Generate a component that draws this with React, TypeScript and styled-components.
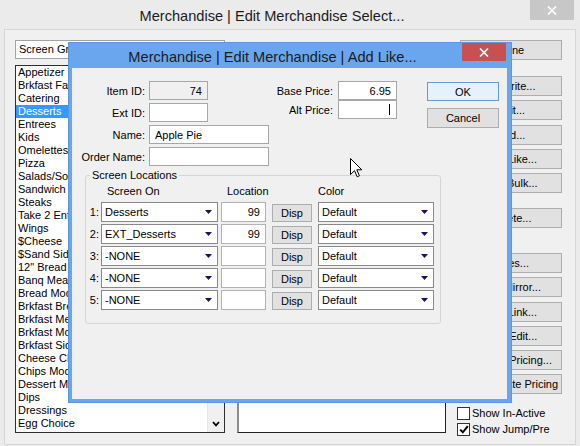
import React from "react";
import styled, { createGlobalStyle } from "styled-components";

const Global = createGlobalStyle`
  html, body { margin: 0; padding: 0; background: #ebebeb; }
  body { font-family: "Liberation Sans", Arial, sans-serif; font-size: 11px; color: #000; }
  * { box-sizing: border-box; }
`;

const Desktop = styled.div`
  position: relative;
  width: 580px;
  height: 446px;
  overflow: hidden;
  background: #ebebeb;
`;

const OuterWindow = styled.div`
  width: 580px;
  height: 446px;
  display: flex;
  flex-direction: column;
  background: #ebebeb;
`;

const TitleBar = styled.div<{ $h: number; $active?: boolean }>`
  height: ${(p) => p.$h}px;
  flex: none;
  display: flex;
  align-items: flex-start;
  padding-left: 14px;
  background: ${(p) => (p.$active ? "#6aa6ee" : "#ebebeb")};
`;

const TitleText = styled.div<{ $top: number }>`
  flex: 1;
  text-align: center;
  font-size: 14.6px;
  line-height: 18px;
  padding-top: ${(p) => p.$top}px;
  color: #1b1b1b;
  white-space: nowrap;
  overflow: hidden;
`;

const CloseButton = styled.div<{ $active?: boolean; $right: number; $h: number }>`
  width: 44px;
  height: ${(p) => p.$h}px;
  margin-right: ${(p) => p.$right}px;
  flex: none;
  display: flex;
  align-items: center;
  justify-content: center;
  background: ${(p) => (p.$active ? "#c75050" : "#c7c7c7")};
`;

const OuterClient = styled.div`
  flex: 1;
  margin: 0 4px 1px 4px;
  background: #f0f0f0;
  border: 1px solid #d6d6d6;
  display: flex;
  padding: 10px 0 0 10px;
  min-height: 0;
`;

const LeftCol = styled.div`
  width: 210px;
  display: flex;
  flex-direction: column;
  gap: 6px;
  flex: none;
`;

const ComboBox = styled.div`
  height: 19px;
  background: #fff;
  border: 1px solid #a3a3a3;
  padding-left: 3px;
  line-height: 17px;
  white-space: nowrap;
  overflow: hidden;
`;

const ListBox = styled.div`
  height: 368px;
  background: #fff;
  border: 1px solid #2e2e2e;
  display: flex;
  overflow: hidden;
`;

const ListItems = styled.div`
  flex: 1;
  overflow: hidden;
`;

const ListItem = styled.div<{ $selected?: boolean }>`
  height: 13px;
  line-height: 13px;
  padding-left: 2px;
  white-space: nowrap;
  overflow: hidden;
  background: ${(p) => (p.$selected ? "#3399ff" : "transparent")};
  color: ${(p) => (p.$selected ? "#fff" : "#000")};
`;

const ScrollBar = styled.div`
  width: 17px;
  flex: none;
  background: #f0f0f0;
  border-left: 1px solid #e6e6e6;
  display: flex;
  flex-direction: column;
  justify-content: flex-end;
`;

const ScrollButton = styled.div`
  height: 17px;
  display: flex;
  align-items: center;
  justify-content: center;
`;

const MiddleCol = styled.div`
  width: 209px;
  margin-left: 12px;
  flex: none;
  display: flex;
  flex-direction: column;
`;

const MiddleBox = styled.div`
  margin-top: 25px;
  height: 368px;
  background: #fff;
  border-left: 2px solid #8c8c8c;
  border-top: 2px solid #8c8c8c;
  border-right: 1px solid #222;
  border-bottom: 1px solid #222;
`;

const RightCol = styled.div`
  width: 105px;
  margin-left: 11px;
  flex: none;
  display: flex;
  flex-direction: column;
  gap: 4.3px;
`;

const OuterButton = styled.div<{ $mt?: number }>`
  height: 20px;
  width: 102px;
  margin-left: 3px;
  margin-top: ${(p) => p.$mt ?? 0}px;
  background: #e1e1e1;
  border: 1px solid #adadad;
  display: flex;
  justify-content: center;
  line-height: 18px;
  white-space: nowrap;
  overflow: hidden;
  flex: none;
`;

const CheckGroup = styled.div<{ $mt: number }>`
  margin-top: ${(p) => p.$mt}px;
  display: flex;
  flex-direction: column;
  gap: 3px;
`;

const CheckRow = styled.div`
  display: flex;
  align-items: center;
  gap: 2px;
  height: 13px;
  white-space: nowrap;
`;

const CheckBox = styled.div`
  width: 13px;
  height: 13px;
  background: #fff;
  border: 1px solid #333;
  flex: none;
  display: flex;
  align-items: center;
  justify-content: center;
`;

/* ---------- dialog ---------- */

const Dialog = styled.div`
  position: absolute;
  left: 68px;
  top: 42px;
  width: 444px;
  height: 361px;
  background: #6aa6ee;
  border: 1px solid #5b97df;
  display: flex;
  flex-direction: column;
`;

const DialogClient = styled.div`
  flex: 1;
  margin: 0 4px 3px 3px;
  background: #f0f0f0;
  display: flex;
  flex-direction: column;
`;

const TopArea = styled.div`
  display: flex;
  align-items: flex-start;
  padding-top: 13px;
`;

const FieldsGrid = styled.div<{ $label: number; $gap: number; $rowGap: number; $ml: number }>`
  display: grid;
  grid-template-columns: ${(p) => p.$label}px auto;
  column-gap: ${(p) => p.$gap}px;
  row-gap: ${(p) => p.$rowGap}px;
  align-items: center;
  margin-left: ${(p) => p.$ml}px;
`;

const FieldLabel = styled.div`
  text-align: right;
  white-space: nowrap;
`;

const TextBox = styled.div<{ $w: number; $align?: string; $bg?: string }>`
  width: ${(p) => p.$w}px;
  height: 19px;
  background: ${(p) => p.$bg ?? "#fff"};
  border: 1px solid #a7a7a7;
  padding: 0 5px;
  display: flex;
  align-items: center;
  justify-content: ${(p) => (p.$align === "right" ? "flex-end" : "flex-start")};
  white-space: nowrap;
`;

const Caret = styled.span`
  width: 1px;
  height: 11px;
  background: #000;
  margin-right: 1px;
`;

const ButtonCol = styled.div`
  margin-left: 30px;
  padding-top: 1px;
  display: flex;
  flex-direction: column;
  gap: 7px;
`;

const DialogButton = styled.div<{ $default?: boolean }>`
  width: 72px;
  height: ${(p) => (p.$default ? 19 : 20)}px;
  background: ${(p) => (p.$default ? "#e5f1fb" : "#e1e1e1")};
  border: 1px solid ${(p) => (p.$default ? "#5a9ee0" : "#adadad")};
  display: flex;
  align-items: center;
  justify-content: center;
`;

const GroupBox = styled.fieldset`
  margin: 3px 0 0 13px;
  width: 356px;
  padding: 3px 6px 13px 0;
  border: 1px solid #d5d5d5;
  border-radius: 3px;
  min-width: 0;
`;

const GroupLegend = styled.legend`
  padding: 0 2px;
  margin-left: 4px;
  line-height: 13px;
  font-size: 11px;
`;

const LocGrid = styled.div<{ $rows?: boolean }>`
  display: grid;
  grid-template-columns: 13px 117px 45px 46px 116px;
  column-gap: 3px;
  row-gap: 2px;
  align-items: center;
  margin-left: -1px;
  ${(p) => (p.$rows ? "grid-auto-rows: 20px;" : "line-height: 13px; margin-bottom: 4px;")}
`;

const HeaderCell = styled.div<{ $pl?: number }>`
  padding-left: ${(p) => p.$pl ?? 0}px;
  white-space: nowrap;
`;

const NumLabel = styled.div`
  text-align: right;
  margin-right: -2px;
  padding-right: 1px;
`;

const Select = styled.div`
  height: 20px;
  background: #fff;
  border: 1px solid #8a8a8a;
  display: flex;
  align-items: center;
  justify-content: space-between;
  padding: 0 5px 0 3px;
  white-space: nowrap;
`;

const LocBox = styled.div`
  height: 20px;
  background: #fff;
  border: 1px solid #b3b3b3;
  text-align: right;
  padding-right: 5px;
  line-height: 18px;
`;

const DispButton = styled.div`
  width: 40px;
  height: 18px;
  justify-self: center;
  margin-top: 1px;
  background: #e1e1e1;
  border: 1px solid #adadad;
  text-align: center;
  line-height: 16px;
`;

const Cursor = styled.svg`
  position: absolute;
  left: 350px;
  top: 158px;
`;

const CloseX = () => (
  <svg width="10" height="9" viewBox="0 0 10 9">
    <path d="M1 0.5 L9 8.5 M9 0.5 L1 8.5" stroke="#fff" strokeWidth="1.7" fill="none" />
  </svg>
);

const DownArrow = () => (
  <svg width="7" height="4" viewBox="0 0 7 4">
    <path d="M0 0 H7 L3.5 4 Z" fill="#14146e" />
  </svg>
);

const listItems = [
  "Appetizer",
  "Brkfast Favorites",
  "Catering",
  "Desserts",
  "Entrees",
  "Kids",
  "Omelettes",
  "Pizza",
  "Salads/Soups",
  "Sandwich",
  "Steaks",
  "Take 2 Entrees",
  "Wings",
  "$Cheese",
  "$Sand Sides",
  ' 12" Bread',
  "Banq Meats",
  "Bread Mods",
  "Brkfast Breads",
  "Brkfast Meats",
  "Brkfast Mods",
  "Brkfast Sides",
  "Cheese Choice",
  "Chips Mods",
  "Dessert Mods",
  "Dips",
  "Dressings",
  "Egg Choice",
  "Entree Mods",
];

const outerButtons: { label: string; mt?: number }[] = [
  { label: "Done" },
  { label: "Favorite...", mt: 11.7 },
  { label: "Edit..." },
  { label: "Add..." },
  { label: "Add Like..." },
  { label: "Add Bulk..." },
  { label: "Delete...", mt: 10.5 },
  { label: "Sizes...", mt: 20.7 },
  { label: "Add Mirror..." },
  { label: "Add Link..." },
  { label: "Bulk Edit..." },
  { label: "Special Pricing..." },
  { label: "Recalculate Pricing" },
];

const locations = [
  { screen: "Desserts", loc: "99" },
  { screen: "EXT_Desserts", loc: "99" },
  { screen: "-NONE", loc: "" },
  { screen: "-NONE", loc: "" },
  { screen: "-NONE", loc: "" },
];

export default function App() {
  return (
    <>
      <Global />
      <Desktop>
        <OuterWindow>
          <TitleBar $h={29}>
            <TitleText $top={7}>Merchandise | Edit Merchandise Select...</TitleText>
            <CloseButton $right={6} $h={20}>
              <CloseX />
            </CloseButton>
          </TitleBar>
          <OuterClient>
            <LeftCol>
              <ComboBox>Screen Groups</ComboBox>
              <ListBox>
                <ListItems>
                  {listItems.map((it) => (
                    <ListItem key={it} $selected={it === "Desserts"}>
                      {it}
                    </ListItem>
                  ))}
                </ListItems>
                <ScrollBar>
                  <ScrollButton>
                    <svg width="8" height="6" viewBox="0 0 8 6">
                      <path d="M1 1 L4 4.3 L7 1" stroke="#000" strokeWidth="1.8" fill="none" />
                    </svg>
                  </ScrollButton>
                </ScrollBar>
              </ListBox>
            </LeftCol>
            <MiddleCol>
              <MiddleBox />
            </MiddleCol>
            <RightCol>
              {outerButtons.map((b) => (
                <OuterButton key={b.label} $mt={b.mt}>
                  {b.label}
                </OuterButton>
              ))}
              <CheckGroup $mt={8.2}>
                <CheckRow>
                  <CheckBox />
                  Show In-Active
                </CheckRow>
                <CheckRow>
                  <CheckBox>
                    <svg width="10" height="9" viewBox="0 0 10 9">
                      <path d="M1.2 4.6 L3.8 7.3 L8.8 1.2" stroke="#000" strokeWidth="2" fill="none" />
                    </svg>
                  </CheckBox>
                  Show Jump/Pre
                </CheckRow>
              </CheckGroup>
            </RightCol>
          </OuterClient>
        </OuterWindow>

        <Dialog>
          <TitleBar $h={25} $active>
            <TitleText $top={5}>Merchandise | Edit Merchandise | Add Like...</TitleText>
            <CloseButton $active $right={5} $h={18}>
              <CloseX />
            </CloseButton>
          </TitleBar>
          <DialogClient>
            <TopArea>
              <FieldsGrid $label={73} $gap={4} $rowGap={3} $ml={0}>
                <FieldLabel>Item ID:</FieldLabel>
                <TextBox $w={59} $align="right" $bg="#f0f0f0">
                  74
                </TextBox>
                <FieldLabel>Ext ID:</FieldLabel>
                <TextBox $w={59} />
                <FieldLabel>Name:</FieldLabel>
                <TextBox $w={120}>Apple Pie</TextBox>
                <FieldLabel>Order Name:</FieldLabel>
                <TextBox $w={120} />
              </FieldsGrid>
              <FieldsGrid $label={60} $gap={5} $rowGap={0} $ml={4}>
                <FieldLabel>Base Price:</FieldLabel>
                <TextBox $w={59} $align="right">
                  6.95
                </TextBox>
                <FieldLabel>Alt Price:</FieldLabel>
                <TextBox $w={59} $align="right">
                  <Caret />
                </TextBox>
              </FieldsGrid>
              <ButtonCol>
                <DialogButton $default>OK</DialogButton>
                <DialogButton>Cancel</DialogButton>
              </ButtonCol>
            </TopArea>
            <GroupBox>
              <GroupLegend>Screen Locations</GroupLegend>
              <LocGrid>
                <HeaderCell />
                <HeaderCell $pl={6}>Screen On</HeaderCell>
                <HeaderCell $pl={6}>Location</HeaderCell>
                <HeaderCell />
                <HeaderCell>Color</HeaderCell>
              </LocGrid>
              <LocGrid $rows>
                {locations.map((l, i) => (
                  <React.Fragment key={i}>
                    <NumLabel>{i + 1}:</NumLabel>
                    <Select>
                      <span>{l.screen}</span>
                      <DownArrow />
                    </Select>
                    <LocBox>{l.loc}</LocBox>
                    <DispButton>Disp</DispButton>
                    <Select>
                      <span>Default</span>
                      <DownArrow />
                    </Select>
                  </React.Fragment>
                ))}
              </LocGrid>
            </GroupBox>
          </DialogClient>
        </Dialog>

        <Cursor width="13" height="20" viewBox="0 0 13 20">
          <path
            d="M0.5 0.5 L0.5 16.5 L4.5 12.7 L7.2 18.8 L9.4 17.8 L6.8 11.8 L11.8 11.8 Z"
            fill="#fff"
            stroke="#000"
            strokeWidth="1"
            strokeLinejoin="miter"
          />
        </Cursor>
      </Desktop>
    </>
  );
}
